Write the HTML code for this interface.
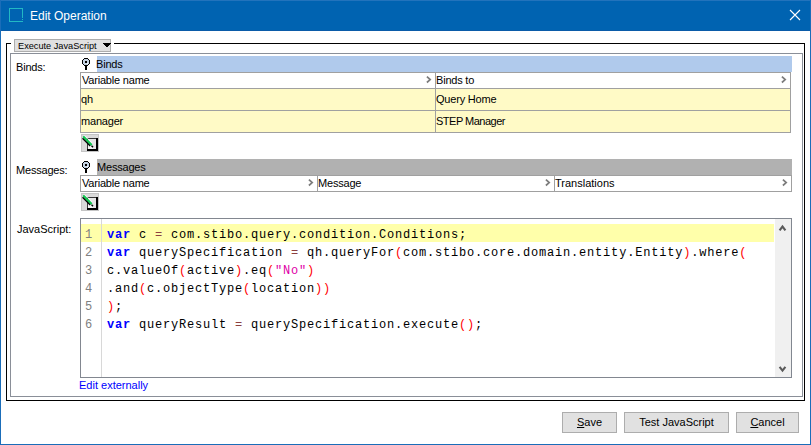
<!DOCTYPE html>
<html><head><meta charset="utf-8">
<style>
*{margin:0;padding:0;box-sizing:border-box}
html,body{width:811px;height:445px;overflow:hidden;background:#fff}
body{position:relative;font-family:"Liberation Sans",sans-serif;font-size:11px;color:#000}
.a{position:absolute}
.t{position:absolute;white-space:nowrap;line-height:14px;font-size:11px;letter-spacing:-0.2px}
.mono{font-family:"Liberation Mono",monospace;font-size:12px;letter-spacing:0.8px;line-height:18px;white-space:pre}
.kw{color:#0000ff;font-weight:bold}
.op{color:#8c4040}
.par{color:#ff0000}
.str{color:#e000a8}
.ln{color:#808080}
.btn{position:absolute;background:#e1e1e1;border:1px solid #adadad;height:21px;font-size:11px;line-height:19px;text-align:center}
</style></head><body>
<!-- dialog frame -->
<div class="a" style="left:0;top:0;width:811px;height:31px;background:#0063b1"></div>
<div class="a" style="left:0;top:30px;width:811px;height:1px;background:#0a5ba8"></div>
<div class="a" style="left:0;top:0;width:811px;height:1px;background:#2273bc"></div>
<div class="a" style="left:0;top:0;width:1px;height:445px;background:#1a6db9"></div>
<div class="a" style="left:810px;top:0;width:1px;height:445px;background:#1a6db9"></div>
<div class="a" style="left:0;top:444px;width:811px;height:1px;background:#1a6db9"></div>
<!-- title icon -->
<svg class="a" style="left:9px;top:8px" width="14" height="14" shape-rendering="crispEdges"><path d="M0 0h14v10h-1v-9h-12v12h13v1h-14z M13 11h1v1h-1z" fill="#22b8c4"/></svg>
<div class="t" style="left:30px;top:8px;color:#fff;font-size:12px;line-height:16px;letter-spacing:0">Edit Operation</div>
<!-- close X -->
<svg class="a" style="left:789px;top:9px" width="12" height="12"><path d="M1 1L11 11M11 1L1 11" stroke="#fff" stroke-width="1.1"/></svg>

<!-- fieldset -->
<div class="a" style="left:6px;top:43px;width:799px;height:358px;border:1px solid #000"></div>
<div class="a" style="left:11px;top:42px;width:103px;height:3px;background:#fff"></div>
<!-- dropdown -->
<div class="a" style="left:14px;top:39px;width:97px;height:13px;background:#e1e1e1;border:1px solid #adadad"></div>
<div class="t" style="left:18px;top:39px;font-size:9.2px;line-height:14px;letter-spacing:0">Execute JavaScript</div>
<svg class="a" style="left:103px;top:43px" width="8" height="4" shape-rendering="crispEdges"><path d="M0 0h8v1h-1v1h-1v1h-1v1h-2v-1h-1v-1h-1v-1h-1z" fill="#000"/></svg>

<!-- inner panel -->
<div class="a" style="left:10px;top:53px;width:793px;height:344px;border:1px solid #8a8f98"></div>

<!-- Binds -->
<div class="t" style="left:16px;top:60px">Binds:</div>
<svg class="a" style="left:82px;top:58px" width="8" height="12" shape-rendering="crispEdges"><path d="M2 0h4v1h1v1h1v4h-1v1h-1v1h-1v4h-2v-4h-1v-1h-1v-1h-1v-4h1v-1h1z" fill="#000"/><path d="M2 1h4v1h1v4h-1v1h-4v-1h-1v-4h1z" fill="#c4d2e2"/><path d="M5 5h1v1h-2v-0z" fill="#fff"/><rect x="3" y="3" width="2" height="2" fill="#000"/></svg>
<div class="a" style="left:97px;top:56px;width:695px;height:16px;background:#b0caec"></div>
<div class="t" style="left:96px;top:57px">Binds</div>
<div class="a" style="left:80px;top:72px;width:711px;height:61px;border:1px solid #a0a0a0;background:#fffac6"></div>
<div class="a" style="left:81px;top:73px;width:709px;height:15px;background:#fff"></div>
<div class="a" style="left:81px;top:88px;width:709px;height:1px;background:#a0a0a0"></div>
<div class="a" style="left:81px;top:110px;width:709px;height:1px;background:#a0a0a0"></div>
<div class="a" style="left:435px;top:73px;width:1px;height:59px;background:#a0a0a0"></div>
<div class="t" style="left:82px;top:73px">Variable name</div>
<svg class="a" style="left:426px;top:76px" width="6" height="8"><path d="M0.9 0.7L4.2 3.6L0.9 6.5" fill="none" stroke="#7c7c7c" stroke-width="1.7"/></svg>
<div class="t" style="left:436px;top:73px">Binds to</div>
<svg class="a" style="left:781px;top:76px" width="6" height="8"><path d="M0.9 0.7L4.2 3.6L0.9 6.5" fill="none" stroke="#7c7c7c" stroke-width="1.7"/></svg>
<div class="t" style="left:81px;top:92px">qh</div>
<div class="t" style="left:436px;top:92px">Query Home</div>
<div class="t" style="left:81px;top:114px">manager</div>
<div class="t" style="left:436px;top:114px;letter-spacing:-0.5px">STEP Manager</div>
<!-- edit icon 1 -->
<svg class="a" style="left:81px;top:134px" width="18" height="18"><g shape-rendering="crispEdges"><rect x="0" y="0" width="18" height="18" fill="#c4c4c4"/><rect x="1" y="1" width="16" height="16" fill="#dadada"/><rect x="6" y="4" width="11" height="13" fill="#383838"/><rect x="15" y="4" width="2" height="13" fill="#000"/><rect x="6" y="15" width="11" height="2" fill="#000"/><rect x="7" y="5" width="8" height="10" fill="#e6e6e6"/><rect x="7" y="11" width="5" height="4" fill="#f6f6f6"/></g><path d="M1.6 4.2L9.3 11.9" stroke="#000" stroke-width="1.5"/><path d="M2.8 3L10.2 10.4" stroke="#10c850" stroke-width="2.1" stroke-linecap="round"/><path d="M3.6 1.4L11 8.8" stroke="#fff" stroke-width="0.8"/><path d="M10.6 11.8L12 13.2" stroke="#000" stroke-width="1.5"/></svg>

<!-- Messages -->
<div class="t" style="left:16px;top:163px">Messages:</div>
<svg class="a" style="left:82px;top:161px" width="8" height="12" shape-rendering="crispEdges"><path d="M2 0h4v1h1v1h1v4h-1v1h-1v1h-1v4h-2v-4h-1v-1h-1v-1h-1v-4h1v-1h1z" fill="#000"/><path d="M2 1h4v1h1v4h-1v1h-4v-1h-1v-4h1z" fill="#c4d2e2"/><path d="M5 5h1v1h-2v-0z" fill="#fff"/><rect x="3" y="3" width="2" height="2" fill="#000"/></svg>
<div class="a" style="left:97px;top:159px;width:695px;height:16px;background:#b1b1b1"></div>
<div class="t" style="left:97px;top:160px">Messages</div>
<div class="a" style="left:80px;top:175px;width:712px;height:17px;border:1px solid #a0a0a0;background:#fff"></div>
<div class="a" style="left:317px;top:176px;width:1px;height:15px;background:#a0a0a0"></div>
<div class="a" style="left:554px;top:176px;width:1px;height:15px;background:#a0a0a0"></div>
<div class="t" style="left:82px;top:176px">Variable name</div>
<svg class="a" style="left:308px;top:179px" width="6" height="8"><path d="M0.9 0.7L4.2 3.6L0.9 6.5" fill="none" stroke="#7c7c7c" stroke-width="1.7"/></svg>
<div class="t" style="left:318px;top:176px">Message</div>
<svg class="a" style="left:545px;top:179px" width="6" height="8"><path d="M0.9 0.7L4.2 3.6L0.9 6.5" fill="none" stroke="#7c7c7c" stroke-width="1.7"/></svg>
<div class="t" style="left:555px;top:176px;letter-spacing:0">Translations</div>
<svg class="a" style="left:782px;top:179px" width="6" height="8"><path d="M0.9 0.7L4.2 3.6L0.9 6.5" fill="none" stroke="#7c7c7c" stroke-width="1.7"/></svg>
<!-- edit icon 2 -->
<svg class="a" style="left:81px;top:193px" width="18" height="18"><g shape-rendering="crispEdges"><rect x="0" y="0" width="18" height="18" fill="#c4c4c4"/><rect x="1" y="1" width="16" height="16" fill="#dadada"/><rect x="6" y="4" width="11" height="13" fill="#383838"/><rect x="15" y="4" width="2" height="13" fill="#000"/><rect x="6" y="15" width="11" height="2" fill="#000"/><rect x="7" y="5" width="8" height="10" fill="#e6e6e6"/><rect x="7" y="11" width="5" height="4" fill="#f6f6f6"/></g><path d="M1.6 4.2L9.3 11.9" stroke="#000" stroke-width="1.5"/><path d="M2.8 3L10.2 10.4" stroke="#10c850" stroke-width="2.1" stroke-linecap="round"/><path d="M3.6 1.4L11 8.8" stroke="#fff" stroke-width="0.8"/><path d="M10.6 11.8L12 13.2" stroke="#000" stroke-width="1.5"/></svg>

<!-- JavaScript -->
<div class="t" style="left:17px;top:222px;letter-spacing:0">JavaScript:</div>
<div class="a" style="left:80px;top:218px;width:712px;height:160px;border:1px solid #828790;background:#fff"></div>
<div class="a" style="left:81px;top:224px;width:693px;height:18px;background:#ffffaa"></div>
<div class="a" style="left:101px;top:219px;width:1px;height:158px;background:#d8d8d8"></div>
<div class="a" style="left:775px;top:219px;width:16px;height:158px;background:#f0f0f0"></div>
<svg class="a" style="left:775px;top:219px" width="16" height="158"><path d="M4.6 11.4L7.5 7.6L10.4 11.4" fill="none" stroke="#5a5a5a" stroke-width="2.1"/><path d="M4.6 147.8L7.5 151.6L10.4 147.8" fill="none" stroke="#5a5a5a" stroke-width="2.1"/></svg>
<div class="a mono ln" style="left:85px;top:226px">1
2
3
4
5
6</div>
<div class="a mono" style="left:107px;top:226px"><span class="kw">var</span> c <span class="op">=</span> com.stibo.query.condition.Conditions;
<span class="kw">var</span> querySpecification <span class="op">=</span> qh.queryFor<span class="par">(</span>com.stibo.core.domain.entity.Entity<span class="par">)</span>.where<span class="par">(</span>
c.valueOf<span class="par">(</span>active<span class="par">)</span>.eq<span class="par">(</span><span class="str">"No"</span><span class="par">)</span>
.and<span class="par">(</span>c.objectType<span class="par">(</span>location<span class="par">))</span>
<span class="par">)</span>;
<span class="kw">var</span> queryResult <span class="op">=</span> querySpecification.execute<span class="par">()</span>;</div>
<div class="t" style="left:79px;top:378px;color:#0000ff;font-size:11px;letter-spacing:0">Edit externally</div>

<!-- buttons -->
<div class="btn" style="left:562px;top:412px;width:55px"><u>S</u>ave</div>
<div class="btn" style="left:624px;top:412px;width:105px">Test JavaScript</div>
<div class="btn" style="left:736px;top:412px;width:63px"><u>C</u>ancel</div>
</body></html>
